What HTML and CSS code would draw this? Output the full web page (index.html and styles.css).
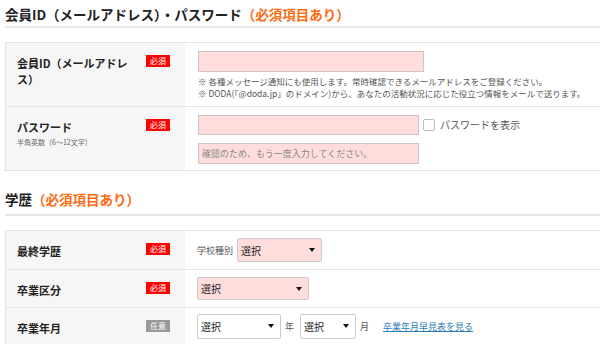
FILE: index.html
```html
<!DOCTYPE html>
<html lang="ja">
<head>
<meta charset="utf-8">
<link rel="stylesheet" href="styles.css">
</head>
<body>
<div class="page">
  <h2 class="sec-title">会員ID（メールアドレス）・パスワード<span class="req-note">（必須項目あり）</span></h2>
  <div class="form-table">
    <div class="row">
      <div class="label-cell">
        <div class="label-text">会員ID（メールアドレス）</div>
        <span class="badge badge-req">必須</span>
      </div>
      <div class="field-cell f-mail">
        <input class="inp inp-mail" type="text">
        <p class="note">※ 各種メッセージ通知にも使用します。常時確認できるメールアドレスをご登録ください。<br>※ DODA(「@doda.jp」のドメイン)から、あなたの活動状況に応じた役立つ情報をメールで送ります。</p>
      </div>
    </div>
    <div class="row">
      <div class="label-cell">
        <div class="label-text">パスワード<span class="sub">半角英数（6～12文字）</span></div>
        <span class="badge badge-req">必須</span>
      </div>
      <div class="field-cell f-pass">
        <div class="pass-line">
          <input class="inp inp-pass" type="password">
          <label class="show-pass"><span class="cbox"></span>パスワードを表示</label>
        </div>
        <input class="inp inp-pass inp-confirm" type="text" placeholder="確認のため、もう一度入力してください。">
      </div>
    </div>
  </div>

  <h2 class="sec-title sec-2">学歴<span class="req-note">（必須項目あり）</span></h2>
  <div class="form-table">
    <div class="row">
      <div class="label-cell">
        <div class="label-text">最終学歴</div>
        <span class="badge badge-req">必須</span>
      </div>
      <div class="field-cell f-sel">
        <span class="small-lbl">学校種別</span>
        <span class="sel sel-pink sel-school">選択<i class="arr"></i></span>
      </div>
    </div>
    <div class="row">
      <div class="label-cell">
        <div class="label-text">卒業区分</div>
        <span class="badge badge-req">必須</span>
      </div>
      <div class="field-cell f-sel">
        <span class="sel sel-pink sel-kubun">選択<i class="arr"></i></span>
      </div>
    </div>
    <div class="row row-last">
      <div class="label-cell">
        <div class="label-text">卒業年月</div>
        <span class="badge badge-opt">任意</span>
      </div>
      <div class="field-cell f-sel">
        <span class="sel sel-white sel-year">選択<i class="arr"></i></span>
        <span class="unit">年</span>
        <span class="sel sel-white sel-month">選択<i class="arr"></i></span>
        <span class="unit">月</span>
        <a class="link" href="#">卒業年月早見表を見る</a>
      </div>
    </div>
  </div>
</div>
</body>
</html>
```

FILE: styles.css
```css
html, body {
  margin: 0;
  padding: 0;
  background: #fff;
  overflow: hidden;
}
body {
  font-family: "Noto Sans CJK JP", "Noto Sans", sans-serif;
  color: #333;
}
.page {
  padding-left: 5px;
}
.sec-title {
  margin: 0 0 14px;
  padding: 4px 0 2px;
  font-size: 13.5px;
  line-height: 20px;
  font-weight: bold;
  color: #222;
  border-bottom: 2px solid #e6e6e6;
}
.sec-2 {
  margin-top: 14px;
  padding-bottom: 5px;
}
.req-note {
  color: #ff6a10;
}
.form-table {
  border-top: 1px solid #e4e4e4;
  border-left: 1px solid #e4e4e4;
}
.row {
  display: grid;
  grid-template-columns: 179px 1fr;
  border-bottom: 1px solid #e4e4e4;
}
.label-cell {
  background: #f6f6f6;
  display: flex;
  align-items: flex-start;
  justify-content: space-between;
  padding: 12px 15px 0 11px;
}
.label-text {
  width: 116px;
  font-size: 11px;
  line-height: 16px;
  font-weight: bold;
  color: #222;
}
.sub {
  display: block;
  font-size: 7px;
  line-height: 10px;
  font-weight: normal;
  color: #666;
  margin-top: 2px;
}
.badge {
  width: 24px;
  height: 12px;
  font-size: 8px;
  line-height: 12px;
  text-align: center;
  color: #fff;
  flex: none;
}
.badge-req { background: #f00; }
.badge-opt { background: #999; }
.field-cell {
  padding: 8px 0 0 13px;
  min-width: 0;
}
.inp {
  display: block;
  box-sizing: border-box;
  margin: 0;
  background: #ffdddd;
  border: 1px solid #d2c4c4;
  font-family: inherit;
  font-size: 9px;
  padding: 0 3px;
  outline: none;
}
.inp::placeholder { color: #888; }
.inp-mail {
  width: 226px;
  height: 21px;
}
.note {
  margin: 3px 0 0;
  font-size: 8.5px;
  line-height: 12px;
  color: #555;
  white-space: nowrap;
}
.f-mail { padding-bottom: 7px; }
.f-pass { padding-bottom: 6px; }
.pass-line {
  display: flex;
  align-items: center;
  height: 20px;
  margin-bottom: 8px;
}
.inp-pass {
  width: 221px;
  height: 20px;
}
.inp-confirm { height: 21px; }
.show-pass {
  display: flex;
  align-items: center;
  font-size: 10px;
  line-height: 12px;
  color: #555;
  margin-left: 4px;
}
.cbox {
  box-sizing: border-box;
  width: 12px;
  height: 12px;
  border: 1px solid #bbb;
  border-radius: 2px;
  background: #fff;
  margin-right: 5px;
}
.f-sel {
  display: flex;
  align-items: center;
  padding: 7px 0 7px 12px;
}
.row-last .f-sel { padding-top: 6px; }
.small-lbl {
  font-size: 9px;
  color: #555;
  margin-right: 4px;
}
.sel {
  position: relative;
  box-sizing: border-box;
  height: 24px;
  display: flex;
  align-items: center;
  padding-left: 3px;
  font-size: 10px;
  color: #222;
  border: 1px solid #ccc;
  border-radius: 2px;
}
.sel-pink { background: #ffdddd; }
.sel-kubun { height: 23px; }
.sel-white { background: #fff; height: 25px; }
.arr {
  position: absolute;
  right: 6px;
  top: 9px;
  width: 0;
  height: 0;
  border-left: 3px solid transparent;
  border-right: 3px solid transparent;
  border-top: 4px solid #111;
}
.sel-school { width: 85px; }
.sel-kubun { width: 112px; }
.sel-year { width: 84px; }
.sel-month { width: 56px; }
.unit {
  font-size: 9px;
  color: #555;
  margin: 0 6px 0 4px;
}
.link {
  font-size: 9px;
  color: #2a7ab5;
  text-decoration: underline;
  margin-left: 8px;
}
```
